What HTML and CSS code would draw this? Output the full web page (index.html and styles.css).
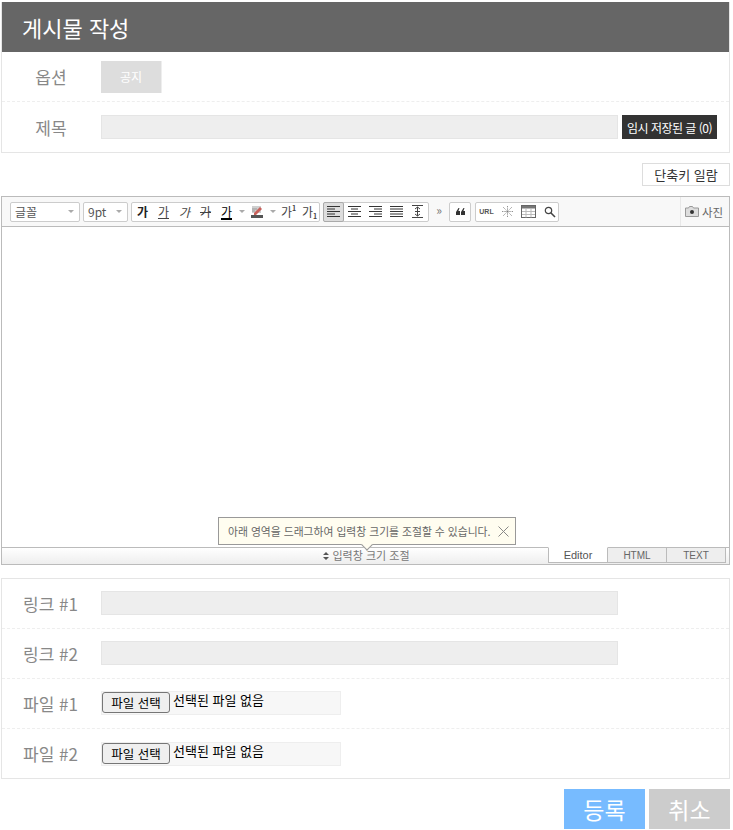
FILE: index.html
```html
<!DOCTYPE html>
<html lang="ko">
<head>
<meta charset="utf-8">
<title>게시물 작성</title>
<link rel="stylesheet" href="styles.css">
</head>
<body>
<main class="page">
  <section class="panel">
    <h1 class="panel-title">게시물 작성</h1>
    <div class="row row-dashed">
      <div class="label label-center">옵션</div>
      <button class="notice" type="button">공지</button>
    </div>
    <div class="row">
      <div class="label label-center">제목</div>
      <div class="input"></div>
      <button class="drafts" type="button">임시 저장된 글 (0)</button>
    </div>
  </section>

  <div class="shortcut-line"><button class="shortcut" type="button">단축키 일람</button></div>

  <section class="editor">
    <div class="toolbar">
      <div class="select select-font"><span>글꼴</span><i class="caret"></i></div>
      <div class="select select-size"><span>9pt</span><i class="caret"></i></div>
      <div class="group group-text">
        <span class="tool glyph bold">가</span>
        <span class="tool glyph under">가</span>
        <span class="tool glyph ital">가</span>
        <span class="tool glyph strike">가</span>
        <span class="tool glyph under color">가</span>
        <i class="caret caret-tool"></i>
        <span class="tool">
          <svg width="15" height="15" viewBox="0 0 15 15"><rect x="1" y="11" width="12" height="3" fill="#555"/><path d="M2 2h9v7H2z" fill="#cfcfcf"/><path d="M4 9l6-6 2 2-6 6H4z" fill="#c8605a"/><path d="M2 5h5M2 7h3" stroke="#999" fill="none"/></svg>
        </span>
        <i class="caret caret-tool"></i>
        <span class="tool glyph">가<sup>1</sup></span>
        <span class="tool glyph">가<sub>1</sub></span>
      </div>
      <div class="group group-align">
        <span class="tool tool-active"><svg width="13" height="12" viewBox="0 0 13 12"><path d="M0 .5h13M0 3h8M0 5.500h13M0 8h8M0 10.500h13" stroke="#333" fill="none"/></svg></span>
        <span class="tool"><svg width="13" height="12" viewBox="0 0 13 12"><path d="M0 .5h13M3 3h7M0 5.500h13M3 8h7M0 10.500h13" stroke="#333" fill="none"/></svg></span>
        <span class="tool"><svg width="13" height="12" viewBox="0 0 13 12"><path d="M0 .5h13M5 3h8M0 5.500h13M5 8h8M0 10.500h13" stroke="#333" fill="none"/></svg></span>
        <span class="tool"><svg width="13" height="12" viewBox="0 0 13 12"><path d="M0 .5h13M0 3h13M0 5.500h13M0 8h13M0 10.500h13" stroke="#333" fill="none"/></svg></span>
        <span class="tool"><svg width="13" height="13" viewBox="0 0 13 13"><path d="M1 .5h11M1 12.500h11M6.500 2v9M4 4l2.500-2L9 4M4 9l2.500 2L9 9M4 6.500h5" stroke="#444" fill="none"/></svg></span>
      </div>
      <span class="more">»</span>
      <div class="group group-quote">
        <span class="tool"><svg width="9" height="7" viewBox="0 0 9 7"><path d="M0 4l2.500-4h1L2.400 3H4v4H0zM5 4l2.500-4h1L7.400 3H9v4H5z" fill="#333"/></svg></span>
      </div>
      <div class="group group-insert">
        <span class="tool url">URL</span>
        <span class="tool"><svg width="11" height="11" viewBox="0 0 13 13"><path d="M6.500 0v5M6.500 8v5M0 6.500h5M8 6.500h5M1.500 1.500l3.500 3.500M8 8l3.500 3.500M11.500 1.500L8 5M5 8l-3.500 3.500" stroke="#666" stroke-dasharray="1 1" fill="none"/><rect x="5.500" y="5.500" width="2" height="2" fill="#777"/></svg></span>
        <span class="tool"><svg width="15" height="13" viewBox="0 0 15 13"><rect x=".5" y=".5" width="14" height="12" fill="#fff" stroke="#666"/><rect x="1" y="1" width="13" height="2.500" fill="#777"/><path d="M5 3.500v9M10 3.500v9M1 6.500h13M1 9.500h13" stroke="#bbb" fill="none"/></svg></span>
        <span class="tool"><svg width="12" height="12" viewBox="0 0 12 12"><circle cx="4.500" cy="4.500" r="3.200" fill="none" stroke="#444" stroke-width="1.200"/><path d="M7 7l4 4" stroke="#444" stroke-width="1.600"/></svg></span>
      </div>
      <div class="photo">
        <svg width="14" height="11" viewBox="0 0 14 11"><path d="M.5 2h3l1-1.500h3l1 1.500h5v8.500H.5z" fill="#ddd" stroke="#999"/><circle cx="7" cy="6" r="2" fill="#333"/></svg>
        <span>사진</span>
      </div>
    </div>
    <div class="canvas"></div>
    <div class="resizer">
      <div class="resize-handle">
        <svg width="6" height="8" viewBox="0 0 6 8"><path d="M3 0l3 3H0zM3 8L0 5h6z" fill="#555"/></svg>
        <span>입력창 크기 조절</span>
      </div>
      <div class="tabs">
        <span class="tab tab-on">Editor</span>
        <span class="tab">HTML</span>
        <span class="tab">TEXT</span>
      </div>
    </div>
    <div class="tip">
      <span>아래 영역을 드래그하여 입력창 크기를 조절할 수 있습니다.</span>
      <svg class="tip-close" width="11" height="11" viewBox="0 0 11 11"><path d="M.5.500l10 10M10.500.500l-10 10" stroke="#888" fill="none"/></svg>
      <i class="tip-arrow"></i>
    </div>
  </section>

  <section class="panel panel-extra">
    <div class="row row-dashed">
      <div class="label">링크 #1</div>
      <div class="input"></div>
    </div>
    <div class="row row-dashed">
      <div class="label">링크 #2</div>
      <div class="input"></div>
    </div>
    <div class="row row-dashed">
      <div class="label">파일 #1</div>
      <div class="file"><button class="file-btn" type="button">파일 선택</button><span class="file-name">선택된 파일 없음</span></div>
    </div>
    <div class="row">
      <div class="label">파일 #2</div>
      <div class="file"><button class="file-btn" type="button">파일 선택</button><span class="file-name">선택된 파일 없음</span></div>
    </div>
  </section>

  <div class="actions">
    <button class="action action-ok" type="button">등록</button>
    <button class="action action-cancel" type="button">취소</button>
  </div>
</main>
</body>
</html>
```
FILE: styles.css
```css
* { box-sizing: border-box; }
html, body { margin: 0; padding: 0; background: #fff; }
body { font-family: "Noto Sans CJK KR", "Noto Sans", sans-serif; color: #666; }
button { font-family: inherit; margin: 0; }
.page { width: 729px; margin-left: 1px; padding-top: 2px; }

.panel { border: 1px solid #e5e5e5; border-top: 0; }
.panel-title {
  margin: 0; height: 50px; background: #666; color: #fff;
  font-size: 22px; font-weight: 400; line-height: 50px; padding-left: 20px;
}
.row { height: 50px; display: flex; align-items: center; }
.row-dashed { border-bottom: 1px dashed #eee; }
.label { width: 99px; flex: none; font-size: 17px; color: #888; padding-left: 21px; white-space: nowrap; }
.label-center { padding-left: 0; padding-right: 1px; text-align: center; }
.notice {
  width: 61px; height: 32px; border: 0; background: #ddd; color: #fff;
  font-size: 12px; padding: 0; border-right: 1px solid #eee;
}
.input { width: 517px; height: 24px; flex: none; background: #eee; border: 1px solid #e5e5e5; }
.drafts {
  margin-left: 4px; width: 95px; height: 24px; background: #333; color: #fff;
  border: 0; font-size: 12px; padding: 0; white-space: nowrap; letter-spacing: -0.5px;
}

.shortcut-line { display: flex; justify-content: flex-end; padding-top: 10px; height: 43px; }
.shortcut {
  width: 88px; height: 23px; background: #fff; border: 1px solid #ddd;
  font-size: 13px; color: #333; padding: 0;
}

.editor { position: relative; height: 369px; border: 1px solid #bbb; display: flex; flex-direction: column; }
.toolbar {
  height: 30px; flex: none; display: flex; align-items: center; padding: 0 0 0 8px;
  background: #f8f8f8; border-bottom: 1px solid #bbb;
}
.select {
  height: 20px; background: #fff; border: 1px solid #ccc; border-radius: 2px;
  display: flex; align-items: center; justify-content: space-between; padding: 0 5px 0 4px;
  font-size: 12px; color: #555; margin-right: 3px;
}
.select-font { width: 70px; }
.select-size { width: 45px; }
.caret { width: 0; height: 0; border: 3px solid transparent; border-top-color: #aaa; border-bottom-width: 0; flex: none; }
.caret-tool { margin: 0 2px; }
.group {
  height: 20px; display: flex; align-items: center; background: #fff;
  border: 1px solid #ccc; border-radius: 2px; margin-right: 3px;
}
.group-text { width: 189px; }
.group-align { width: 106px; margin-right: 0; }
.group-quote { width: 22px; margin-right: 4px; }
.group-insert { width: 84px; }
.tool {
  width: 21px; height: 18px; flex: none; display: flex; align-items: center; justify-content: center;
  font-size: 12px; color: #444; line-height: 1;
}
.tool-active { width: 21px; height: 20px; background: #ddd; border: 1px solid #aaa; border-radius: 2px; margin-left: -1px; }
.glyph sup, .glyph sub { font-size: 7px; line-height: 1; font-weight: 700; }
.glyph sup { align-self: flex-start; margin-top: 2px; }
.glyph sub { align-self: flex-end; margin-bottom: 1px; }
.bold { font-weight: 700; color: #222; }
.under { text-decoration: underline; }
.ital { font-style: italic; }
.strike { text-decoration: line-through; }
.color { color: #000; text-decoration-thickness: 2px; }
.more { width: 20px; text-align: center; font-size: 12px; color: #777; line-height: 16px; padding-bottom: 3px; }
.url { font-size: 7px; font-weight: 700; color: #555; font-family: "Liberation Sans", sans-serif; }
.photo {
  margin-left: auto; height: 29px; width: 49px; display: flex; align-items: center; gap: 3px;
  padding-left: 4px; border-left: 1px solid #e8e8e8; font-size: 11.500px; color: #666;
}
.canvas { flex: 1; background: #fff; }
.resizer {
  height: 17px; flex: none; display: flex; border-top: 1px solid #bbb;
  background: linear-gradient(#fff, #eee);
}
.resize-handle {
  flex: 1; display: flex; align-items: center; justify-content: center; gap: 4px;
  font-size: 11px; line-height: 1; color: #777; padding: 0 0 1px 182px;
}
.tabs { display: flex; margin-right: 3px; margin-top: -1px; }
.tab {
  width: 59px; height: 16px; font-size: 10px; line-height: 15px; text-align: center; color: #666;
  font-family: "Liberation Sans", sans-serif; background: #eee; border: 1px solid #bbb; border-left-width: 0;
}
.tab-on { width: 60px; background: #fff; border-left-width: 1px; border-top-color: #fff; color: #555; font-size: 11px; }
.tip {
  position: absolute; left: 216px; top: 320px; width: 298px; height: 28px;
  background: #fffdf0; border: 1px solid #999; display: flex; align-items: center; padding-left: 9px;
  font-size: 10.800px; color: #666; white-space: nowrap; z-index: 1;
}
.tip-close { position: absolute; right: 6px; top: 8px; }
.tip-arrow {
  position: absolute; left: 144px; bottom: -5px; width: 8px; height: 8px; background: #fffdf0;
  border-right: 1px solid #999; border-bottom: 1px solid #999; transform: rotate(45deg);
}

.panel-extra { margin-top: 13px; border-top: 1px solid #e5e5e5; height: 201px; }
.panel-extra .row { padding-bottom: 1px; }
.file {
  width: 240px; height: 24px; flex: none; background: #f7f7f7; border: 1px solid #eee;
  display: flex; align-items: center; padding: 0 0 1px 0; font-size: 13px; color: #000;
}
.file-btn {
  width: 68px; height: 21px; background: #efefef; border: 1px solid #767676; border-radius: 3px;
  font-size: 12.500px; color: #000; padding: 0; flex: none;
}
.file-name { margin-left: 3px; margin-bottom: 5px; line-height: 1.2; }

.actions { display: flex; justify-content: flex-end; gap: 4px; padding-top: 10px; }
.action { width: 81px; height: 40px; border: 0; color: #fff; font-size: 23px; padding: 0; line-height: 1; }
.action-ok { background: #77bbff; }
.action-cancel { background: #ccc; }
```
